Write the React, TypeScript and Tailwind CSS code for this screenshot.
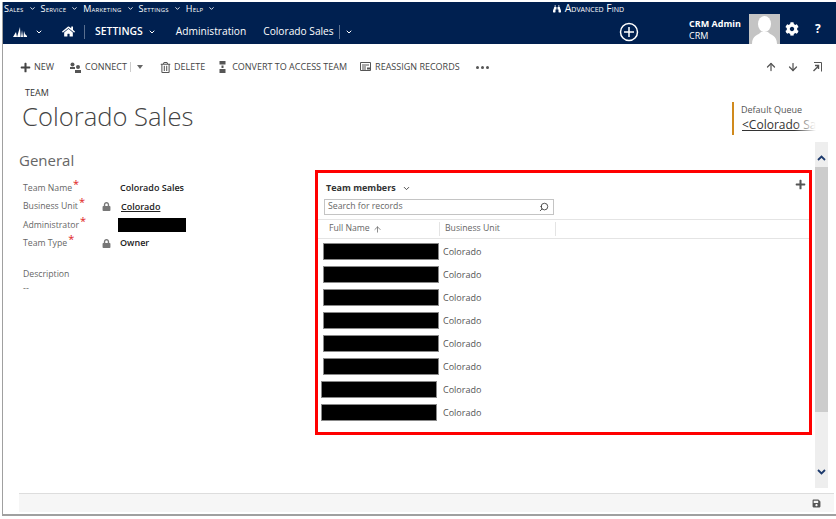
import React from "react";
import {ChevronDown, ArrowUp, ArrowDown, Search} from "lucide-react";
import {FaBinoculars, FaCog, FaHome, FaLock, FaPlus, FaRegTrashAlt, FaSave} from "react-icons/fa";

const font = "font-['Open_Sans','Liberation_Sans',sans-serif]";

const topMenu = ["Sales", "Service", "Marketing", "Settings", "Help"];

const memberRows = [0, 0, 0, 0, 0, 0, -2, -2];

const Required = () => <span className="ml-[1px] relative -top-[3px] text-[11px] leading-none text-[#e02020]">*</span>;

const Field = ({label, locked, children}: {label: string; locked?: boolean; children: React.ReactNode}) => (
    <div className="flex items-center h-[18.3px]">
        <div className="w-[78px] text-[8.7px] text-[#666]">{label}<Required/></div>
        <div className="w-[19px] flex">
            {locked && <FaLock size={9} className="text-[#777] ml-[1px]"/>}
        </div>
        {children}
    </div>
);

const CmdButton = ({icon, label, className}: {icon: React.ReactNode; label: string; className?: string}) => (
    <div className={`flex items-center gap-[3px] text-[9px] text-[#444] ${className ?? ""}`}>
        {icon}
        <span>{label}</span>
    </div>
);

const App = () => {
    return (
        <div className={`w-[836px] h-[519px] bg-white overflow-hidden pl-[2px] pt-[2px] pb-[3px] ${font}`}>
            <div className="h-full flex flex-col border-l border-b-2 border-[#a0a0a0]">
                {/* nav */}
                <div className="h-[42px] bg-[#002050] text-white shrink-0 flex">
                    <div className="flex-1">
                        <div className="h-[13px] flex items-center pl-[1px] pr-[65px] gap-[5px]">
                            {topMenu.map((item) => (
                                <div key={item} className="flex items-center gap-[5px]">
                                    <span className="[font-variant:small-caps] text-[9px] tracking-[0.2px] leading-none">{item}</span>
                                    <ChevronDown size={7} strokeWidth={3}/>
                                </div>
                            ))}
                            <div className="ml-auto flex items-center gap-[4px]">
                                <FaBinoculars size={8}/>
                                <span className="[font-variant:small-caps] text-[10.4px] leading-none">Advanced Find</span>
                            </div>
                        </div>
                        <div className="h-[29px] flex items-center text-[10.2px] pt-[4px]">
                            <svg width="14" height="10" viewBox="0 0 14 10" className="ml-[10px]" fill="#fff">
                                <path d="M0 10 L3 5 L4 10Z M4 10 L7 0 L7.6 10Z M8 10 L9 3 L10 10Z M10.5 10 L11 4 L12 7 L14 9 L14 10Z"/>
                            </svg>
                            <ChevronDown size={8} strokeWidth={3} className="ml-[8px]"/>
                            <FaHome size={13} className="ml-[19px]"/>
                            <div className="w-px h-[14px] bg-[#5a6f8f] ml-[9px]"/>
                            <span className="ml-[10px] font-semibold text-[10.4px]">SETTINGS</span>
                            <ChevronDown size={8} strokeWidth={3} className="ml-[5px]"/>
                            <span className="ml-[20px]">Administration</span>
                            <span className="ml-[17px]">Colorado Sales</span>
                            <div className="w-px h-[14px] bg-[#5a6f8f] ml-[5px]"/>
                            <ChevronDown size={8} strokeWidth={3} className="ml-[5px]"/>
                            <svg width="20" height="20" viewBox="0 0 20 20" fill="none" stroke="#fff" strokeWidth="1.5" className="ml-auto mr-[50px]">
                                <circle cx="10" cy="10" r="8.5"/>
                                <path d="M5 10h10M10 5v10"/>
                            </svg>
                        </div>
                    </div>
                    <div className="w-[147px] shrink-0 flex">
                        <div className="w-[60px] shrink-0 pt-[16px] leading-[12px] text-[9px]">
                            <div className="font-bold">CRM Admin</div>
                            <div>CRM</div>
                        </div>
                        <div className="w-[31px] h-[30px] bg-[#c4c4c4] self-end overflow-hidden shrink-0">
                            <svg width="31" height="30" viewBox="0 0 31 30" fill="#fff">
                                <ellipse cx="15.5" cy="10" rx="6.5" ry="8"/>
                                <path d="M3 30 C3 21 10 21 12 18 L19 18 C21 21 28 21 28 30Z"/>
                            </svg>
                        </div>
                        <FaCog size={14} className="ml-[5px] mt-[20px]"/>
                        <span className="ml-[16px] mt-[18px] font-bold text-[12px] leading-[18px]">?</span>
                    </div>
                </div>

                {/* command bar */}
                <div className="h-[42px] shrink-0 flex items-center pl-[17px] pr-[14px] pt-[4px]">
                    <CmdButton icon={<FaPlus size={11} className="text-[#444]"/>} label="NEW"/>
                    <CmdButton className="ml-[15px]" icon={
                        <svg width="13" height="11" viewBox="0 0 13 11" fill="#555"><circle cx="3.5" cy="2.5" r="2"/><path d="M1 5h5v2H1z"/><circle cx="9" cy="5" r="2"/><path d="M6 8h6v3H6z"/></svg>
                    } label="CONNECT"/>
                    <div className="w-px h-[10px] bg-[#ccc] ml-[3px]"/>
                    <svg width="6" height="4" viewBox="0 0 6 4" fill="#666" className="ml-[6px]"><path d="M0 0h6L3 4z"/></svg>
                    <CmdButton className="ml-[17px]" icon={<FaRegTrashAlt size={11} className="text-[#555]"/>} label="DELETE"/>
                    <CmdButton className="ml-[13px]" icon={
                        <svg width="9" height="12" viewBox="0 0 9 12" fill="#555" className="mr-[2px]"><path d="M1.5 0h6v3.5h-6zM3.5 4.5h2v2.5h-2zM1.5 8h6v4h-6z"/></svg>
                    } label="CONVERT TO ACCESS TEAM"/>
                    <CmdButton className="ml-[13px]" icon={
                        <svg width="12" height="10" viewBox="0 0 12 10" fill="none" stroke="#555" strokeWidth="1"><path d="M.5.5h10v8H.5zM2 3h7M2 5h4M2 7h4"/><path d="M7 6.5h4" strokeWidth="2"/></svg>
                    } label="REASSIGN RECORDS"/>
                    <div className="ml-[16px] flex gap-[2px]">
                        <div className="w-[3px] h-[3px] rounded-full bg-[#555]"/>
                        <div className="w-[3px] h-[3px] rounded-full bg-[#555]"/>
                        <div className="w-[3px] h-[3px] rounded-full bg-[#555]"/>
                    </div>
                    <div className="ml-auto flex items-center text-[#555]">
                        <ArrowUp size={12} strokeWidth={2.5}/>
                        <ArrowDown size={12} strokeWidth={2.5} className="ml-[10px]"/>
                        <svg width="10" height="10" viewBox="0 0 10 10" fill="none" stroke="#555" className="ml-[13px]">
                            <path d="M2 .5h7.5v9"/>
                            <path d="M1.5 9 6 4.5M3 3.5h3.5V7" strokeWidth="1.4"/>
                        </svg>
                    </div>
                </div>

                {/* header */}
                <div className="h-[58px] shrink-0 flex pl-[19px]">
                    <div>
                        <div className="pl-[3px] text-[9px] leading-[13px] text-[#333]">TEAM</div>
                        <div className="text-[25.6px] leading-[36px] font-light text-[#444]">Colorado Sales</div>
                    </div>
                    <div className="ml-auto w-[104px] mt-[16px] h-[33px] border-l-2 border-[#d08a1d] pl-[7px] pt-[1px] overflow-hidden shrink-0">
                        <div className="text-[9px] leading-[13px] text-[#555]">Default Queue</div>
                        <div className="relative text-[12px] leading-[17px] text-[#333] underline whitespace-nowrap overflow-hidden w-[75px] pl-[1px]">
                            &lt;Colorado Sales
                            <div className="absolute inset-y-0 right-0 w-[22px] bg-gradient-to-r from-transparent to-white"/>
                        </div>
                    </div>
                </div>

                {/* form */}
                <div className="flex-1 flex pl-[16px] min-h-0">
                    <div className="w-[296px] shrink-0 pt-[5px]">
                        <div className="text-[15px] leading-[22px] text-[#666]">General</div>
                        <div className="pl-[4px] pt-[8px]">
                            <Field label="Team Name">
                                <span className="text-[9px] font-semibold text-[#222]">Colorado Sales</span>
                            </Field>
                            <Field label="Business Unit" locked>
                                <span className="text-[9px] font-semibold text-[#222] underline ml-[1px]">Colorado</span>
                            </Field>
                            <Field label="Administrator">
                                <div className="w-[68px] h-[14px] bg-black -ml-[2px]"/>
                            </Field>
                            <Field label="Team Type" locked>
                                <span className="text-[9px] font-semibold text-[#222]">Owner</span>
                            </Field>
                            <div className="mt-[15px] text-[8.7px] leading-[14px] text-[#666]">Description</div>
                            <div className="text-[9px] leading-[14px] text-[#666]">--</div>
                        </div>
                    </div>
                    <div className="flex-1 pt-[26px] min-w-0">
                        <div className="w-[497px] h-[265px] border-[3px] border-[#f00] pt-[6px]">
                            <div className="h-[18px] flex items-center pl-[8px] pr-[3px]">
                                <span className="text-[9px] font-bold text-[#333]">Team members</span>
                                <ChevronDown size={9} strokeWidth={2.5} className="ml-[6px] text-[#444]"/>
                                <FaPlus size={11} className="ml-auto mb-[8px] text-[#555]"/>
                            </div>
                            <div className="ml-[6px] mt-[2px] w-[230px] h-[16px] border border-[#c4c4c4] flex items-center pl-[3px] pr-[4px]">
                                <span className="text-[8.7px] text-[#666]">Search for records</span>
                                <Search size={10} strokeWidth={2} className="ml-auto text-[#333] -scale-x-100"/>
                            </div>
                            <div className="mt-[4px] h-[20px] border-y border-[#e4e4e4] flex items-center text-[8.7px] text-[#666]">
                                <div className="w-[122px] h-[14px] pl-[11px] flex items-center gap-[3px] border-r border-[#e4e4e4]">
                                    Full Name <ArrowUp size={9} strokeWidth={2}/>
                                </div>
                                <div className="w-[116px] h-[14px] pl-[5px] flex items-center border-r border-[#e4e4e4]">Business Unit</div>
                            </div>
                            <div className="pt-[1px]">
                                {memberRows.map((shift, i) => (
                                    <div key={i} className={`h-[23px] flex items-center ${shift ? "pl-[3px]" : "pl-[5px]"}`}>
                                        <div className="w-[116px] h-[17px] bg-black border border-[#888]"/>
                                        <span className={`text-[9px] text-[#555] ${shift ? "ml-[6px]" : "ml-[4px]"}`}>Colorado</span>
                                    </div>
                                ))}
                            </div>
                        </div>
                    </div>
                    <div className="w-[13px] -mt-[2px] h-[346px] bg-[#eee] flex flex-col items-center shrink-0 mr-[8px]">
                        <div className="h-[25px] flex items-center pt-[6px]">
                            <svg width="9" height="6" viewBox="0 0 9 6" fill="none" stroke="#1d3a6d" strokeWidth="1.8"><path d="M1 5l3.5-3.5L8 5"/></svg>
                        </div>
                        <div className="w-full h-[245px] bg-[#ccc]"/>
                        <div className="mt-auto h-[32px] flex items-center">
                            <svg width="9" height="6" viewBox="0 0 9 6" fill="none" stroke="#1d3a6d" strokeWidth="1.8"><path d="M1 1l3.5 3.5L8 1"/></svg>
                        </div>
                    </div>
                </div>

                {/* footer */}
                <div className="h-[19px] shrink-0 ml-[16px] mr-[2px] mb-[2px] bg-[#f6f6f6] border-t border-[#ddd] flex items-center justify-end pr-[13px]">
                    <FaSave size={9} className="text-[#555]"/>
                </div>
            </div>
        </div>
    )
}

export default App
